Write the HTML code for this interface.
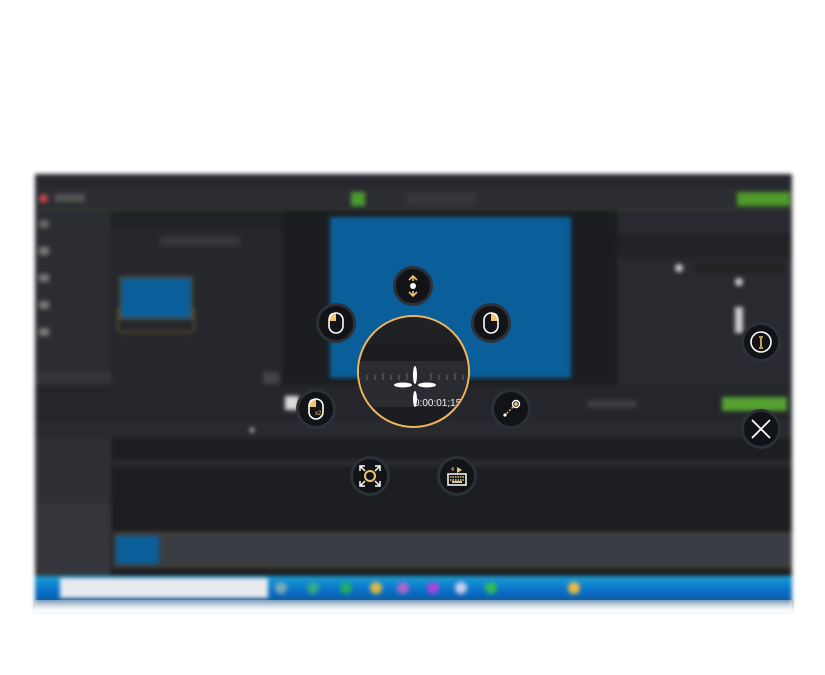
<!DOCTYPE html>
<html><head><meta charset="utf-8"><style>
*{margin:0;padding:0;box-sizing:border-box}
body{width:825px;height:675px;background:#fff;position:relative;overflow:hidden;font-family:"Liberation Sans",sans-serif}
.a{position:absolute}
#bg{position:absolute;left:35px;top:174px;width:757px;height:438px;filter:blur(2px);overflow:hidden;background:#1c1e22}
.btn{position:absolute;width:40px;height:40px;border-radius:50%;background:#121316;border:3px solid #2c3139;display:flex;align-items:center;justify-content:center}
.d{position:absolute;width:12px;height:12px;border-radius:50%;top:408px}
</style></head><body>
<div id="bg">
 <div class="a" style="left:0;top:0;width:757px;height:14px;background:#26282d"></div>
 <div class="a" style="left:0;top:14px;width:757px;height:22px;background:#2b2d32;border-bottom:1px solid #3a4a2a"></div>
 <div class="a" style="left:4px;top:20px;width:9px;height:9px;border-radius:50%;background:#c8414b"></div>
 <div class="a" style="left:20px;top:20px;width:30px;height:8px;background:#555"></div>
 <div class="a" style="left:316px;top:18px;width:14px;height:14px;background:#4a9a2e"></div>
 <div class="a" style="left:372px;top:19px;width:68px;height:12px;background:#35373c"></div>
 <div class="a" style="left:702px;top:18px;width:53px;height:14px;background:#4f9a2a"></div>
 <div class="a" style="left:0;top:36px;width:76px;height:175px;background:#2b2d33"></div>
 <div class="a" style="left:4px;top:46px;width:10px;height:8px;background:#666"></div>
 <div class="a" style="left:4px;top:73px;width:10px;height:8px;background:#777"></div>
 <div class="a" style="left:4px;top:100px;width:10px;height:8px;background:#777"></div>
 <div class="a" style="left:4px;top:127px;width:10px;height:8px;background:#777"></div>
 <div class="a" style="left:4px;top:154px;width:10px;height:8px;background:#777"></div>
 <div class="a" style="left:0;top:198px;width:92px;height:12px;background:#33353a"></div>
 <div class="a" style="left:77px;top:36px;width:170px;height:175px;background:#25272c"></div>
 <div class="a" style="left:77px;top:38px;width:170px;height:17px;background:#202226"></div>
 <div class="a" style="left:125px;top:62px;width:80px;height:10px;background:#35373c"></div>
 <div class="a" style="left:82px;top:133px;width:78px;height:26px;border:2px solid #5a4a2a;border-radius:3px"></div>
 <div class="a" style="left:84px;top:102px;width:74px;height:44px;border:2px solid #5a4a2a;background:#0a5e9a"></div>
 <div class="a" style="left:228px;top:198px;width:16px;height:12px;background:#444"></div>
 <div class="a" style="left:247px;top:36px;width:335px;height:175px;background:#1b1d21"></div>
 <div class="a" style="left:295px;top:43px;width:241px;height:161px;background:#0a5e9a"></div>
 <div class="a" style="left:582px;top:36px;width:175px;height:175px;background:#282a30"></div>
 <div class="a" style="left:582px;top:60px;width:175px;height:24px;background:#202226"></div>
 <div class="a" style="left:660px;top:88px;width:90px;height:10px;background:#222"></div>
 <div class="a" style="left:640px;top:90px;width:8px;height:8px;border-radius:50%;background:#ccc"></div>
 <div class="a" style="left:700px;top:104px;width:8px;height:8px;border-radius:50%;background:#ccc"></div>
 <div class="a" style="left:700px;top:133px;width:8px;height:26px;background:#ccc"></div>
 <div class="a" style="left:0;top:211px;width:757px;height:35px;background:#24262b"></div>
 <div class="a" style="left:250px;top:222px;width:14px;height:14px;background:#ddd"></div>
 <div class="a" style="left:552px;top:226px;width:50px;height:8px;background:#3b3d42"></div>
 <div class="a" style="left:687px;top:223px;width:65px;height:14px;background:#55a030"></div>
 <div class="a" style="left:0;top:246px;width:757px;height:18px;background:#282a30"></div>
 <div class="a" style="left:215px;top:254px;width:4px;height:4px;background:#ccc"></div>
 <div class="a" style="left:0;top:264px;width:76px;height:138px;background:#2e3036"></div>
 <div class="a" style="left:76px;top:286px;width:681px;height:6px;background:#2a2c31"></div>
 <div class="a" style="left:0;top:330px;width:76px;height:72px;background:#34363c"></div>
 <div class="a" style="left:78px;top:358px;width:679px;height:36px;background:#3a3d44;border-top:2px solid #4b4430;border-bottom:2px solid #4b4430"></div>
 <div class="a" style="left:81px;top:362px;width:43px;height:28px;background:#0a5e9a"></div>
 <div class="a" style="left:0;top:402px;width:757px;height:24px;background:linear-gradient(#1aa0d8,#0a70c8 60%,#0860b0)"></div>
 <div class="a" style="left:25px;top:404px;width:208px;height:20px;background:#e8eaee"></div>
 <div class="d" style="left:240px;background:#7ab"></div>
 <div class="d" style="left:272px;background:#3a8"></div>
 <div class="d" style="left:305px;background:#2a6"></div>
 <div class="d" style="left:335px;background:#db4"></div>
 <div class="d" style="left:362px;background:#a6c"></div>
 <div class="d" style="left:392px;background:#a4d"></div>
 <div class="d" style="left:420px;background:#cce"></div>
 <div class="d" style="left:450px;background:#3b5"></div>
 <div class="d" style="left:533px;background:#eb4"></div>
 <div class="a" style="left:0;top:426px;width:757px;height:12px;background:linear-gradient(rgba(20,120,200,.35),rgba(255,255,255,1))"></div>
</div>
<div class="a" style="left:35px;top:600px;width:757px;height:12px;background:linear-gradient(rgba(200,220,240,.5),#fff)"></div>

<!-- central magnifier -->
<div class="a" style="left:357px;top:315px;width:113px;height:113px;border-radius:50%;border:2px solid #f0b75a;overflow:hidden;background:#1a1c20">
 <div class="a" style="left:0;top:0;width:113px;height:28px;background:#1f2125"></div>
 <div class="a" style="left:0;top:44px;width:113px;height:46px;background:#2a2c31"></div>
 <svg class="a" style="left:0;top:0" width="113" height="113"><g stroke="#666" stroke-width="1"><path d="M8 58v5M16 58v5M24 56v7M32 58v5M40 58v5M48 56v7M72 56v7M80 58v5M88 58v5M96 56v7M104 58v5"/></g>
 <g fill="#fff"><ellipse cx="56" cy="58" rx="2" ry="9"/><ellipse cx="56" cy="82" rx="2" ry="8"/><ellipse cx="44" cy="68" rx="9" ry="2.5"/><ellipse cx="68" cy="68" rx="9" ry="2.5"/></g>
 <text x="55" y="89" fill="#eee" font-size="10" font-family="Liberation Sans">0:00:01;15</text></svg>
</div>

<div class="btn" style="left:393px;top:266px"><svg width="20" height="24" viewBox="0 0 20 24" fill="none" stroke="#f2c46d" stroke-width="1.6"><path d="M6 6l4-4 4 4M10 2v5M6 18l4 4 4-4M10 22v-5"/><circle cx="10" cy="12" r="3" fill="#fff" stroke="none"/></svg></div>
<div class="btn" style="left:316px;top:303px"><svg width="18" height="24" viewBox="0 0 18 24"><path d="M9 2H6a4 4 0 0 0-4 4v4h7z" fill="#f2c46d"/><rect x="2" y="2" width="14" height="20" rx="7" fill="none" stroke="#fff" stroke-width="1.6"/></svg></div>
<div class="btn" style="left:471px;top:303px"><svg width="18" height="24" viewBox="0 0 18 24"><path d="M9 2h3a4 4 0 0 1 4 4v4H9z" fill="#f2c46d"/><rect x="2" y="2" width="14" height="20" rx="7" fill="none" stroke="#fff" stroke-width="1.6"/></svg></div>
<div class="btn" style="left:296px;top:389px"><svg width="18" height="24" viewBox="0 0 18 24"><path d="M9 2H6a4 4 0 0 0-4 4v4h7z" fill="#f2c46d"/><rect x="2" y="2" width="14" height="20" rx="7" fill="none" stroke="#fff" stroke-width="1.6"/><text x="8" y="18" font-size="6" fill="#f2c46d" font-family="Liberation Sans">x2</text></svg></div>
<div class="btn" style="left:491px;top:389px"><svg width="22" height="22" viewBox="0 0 22 22" fill="none" stroke="#f2c46d" stroke-width="1.4"><circle cx="16" cy="6" r="3.5" stroke="#fff"/><circle cx="16" cy="6" r="1.2" fill="#f2c46d"/><path d="M13 9l-7 7" stroke-dasharray="2 1.5"/><circle cx="5" cy="17" r="1.6" fill="#fff" stroke="none"/></svg></div>
<div class="btn" style="left:350px;top:456px"><svg width="24" height="24" viewBox="0 0 24 24" fill="none" stroke-width="1.5"><circle cx="12" cy="12" r="5" stroke="#f2c46d" stroke-width="2"/><path d="M2 7V2h5M3 3l4 4M22 7V2h-5M21 3l-4 4M2 17v5h5M3 21l4-4M22 17v5h-5M21 21l-4-4" stroke="#fff"/></svg></div>
<div class="btn" style="left:437px;top:456px"><svg width="24" height="24" viewBox="0 0 24 24" fill="none"><rect x="3" y="10" width="18" height="11" stroke="#fff" stroke-width="1.5"/><path d="M5 13h14M5 16h14" stroke="#f2c46d" stroke-width="1.5" stroke-dasharray="1.5 1"/><path d="M7 18h10" stroke="#fff" stroke-width="1.5"/><path d="M12 3l5 3-5 3z" fill="#f2c46d"/><path d="M8 3v4M6 5h1" stroke="#f2c46d"/></svg></div>
<div class="btn" style="left:741px;top:322px"><svg width="26" height="26" viewBox="0 0 26 26" fill="none"><circle cx="13" cy="13" r="10" stroke="#fff" stroke-width="1.6"/><path d="M13 9v9M11 8h4M11 19h4" stroke="#f2c46d" stroke-width="1.6"/></svg></div>
<div class="btn" style="left:741px;top:409px"><svg width="24" height="24" viewBox="0 0 24 24"><path d="M3 3l18 18M21 3L3 21" stroke="#fff" stroke-width="1.8"/></svg></div>
</body></html>
